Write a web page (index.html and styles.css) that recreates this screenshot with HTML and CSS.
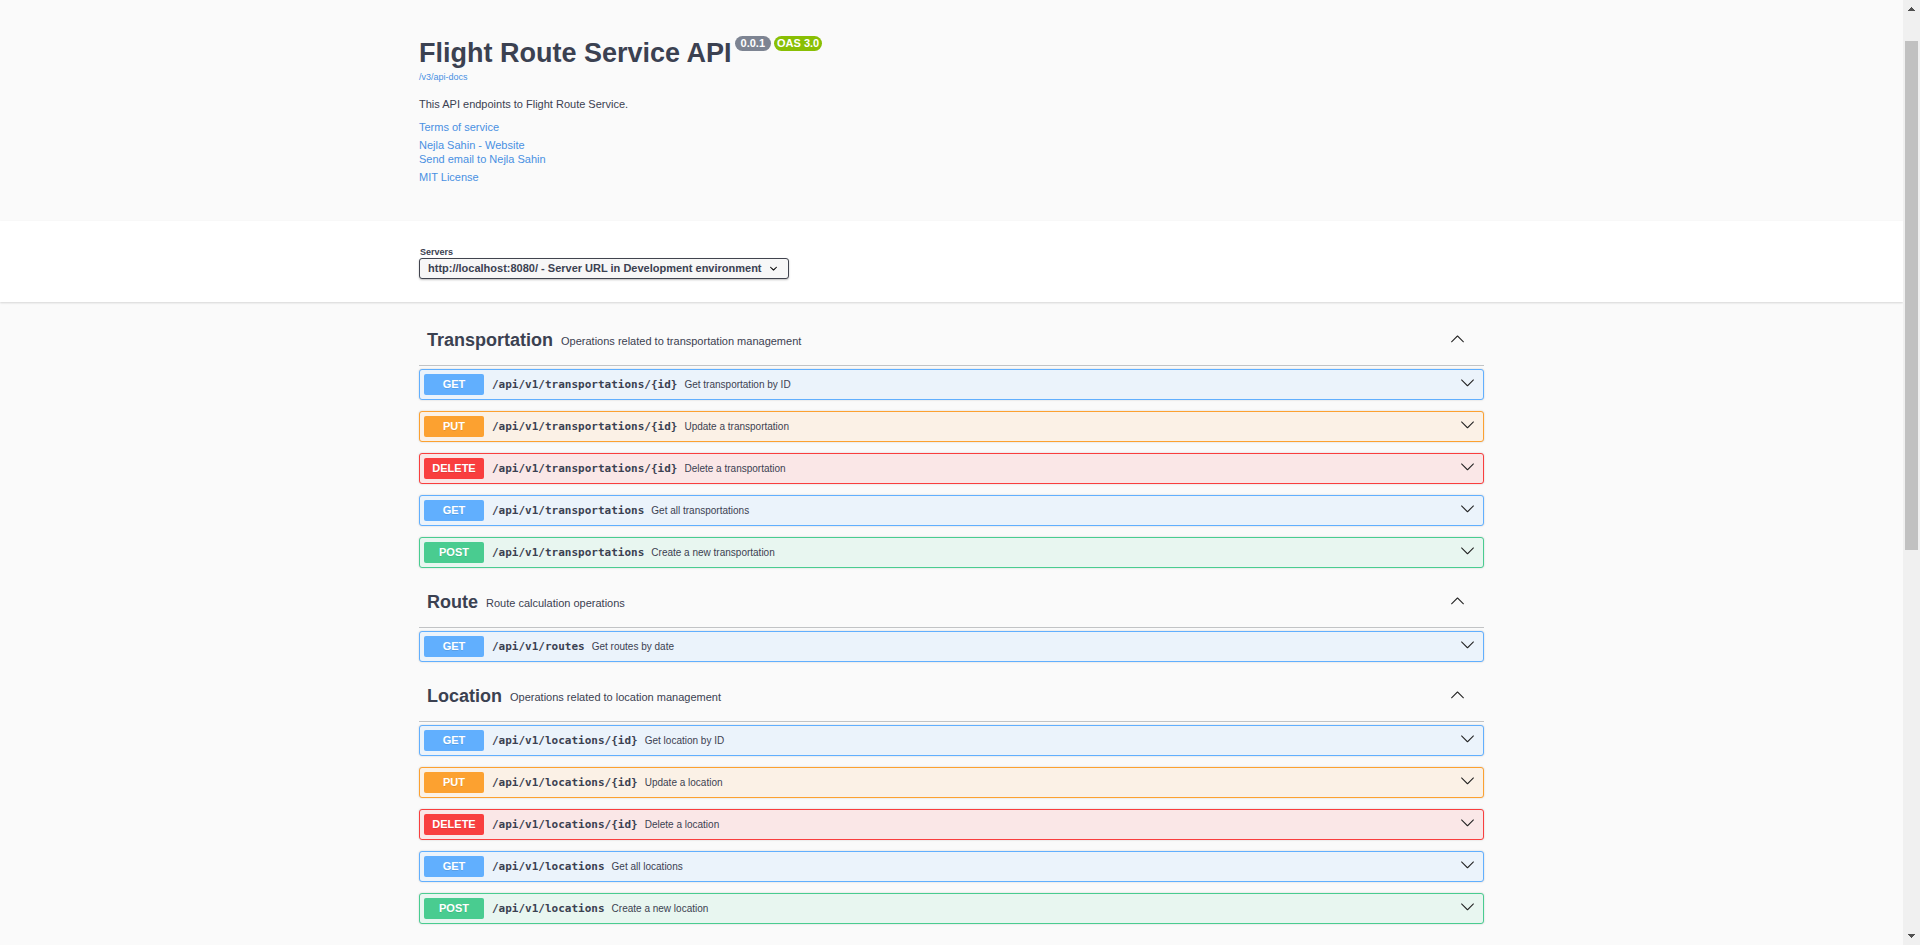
FILE: index.html
```html
<!DOCTYPE html>
<html lang="en">
<head>
<meta charset="utf-8">
<title>Flight Route Service API</title>
<link rel="stylesheet" href="styles.css">
</head>
<body>
<svg class="defs" aria-hidden="true">
  <symbol id="down" viewBox="0 0 20 20"><path d="M17.418 6.109c.272-.268.709-.268.979 0s.271.701 0 .969l-7.908 7.83c-.27.268-.707.268-.979 0l-7.908-7.83c-.27-.268-.27-.701 0-.969.271-.268.709-.268.979 0L10 13.25l7.418-7.141z"/></symbol>
  <symbol id="up" viewBox="0 0 20 20"><path d="M17.418 14.908c.272.27.709.27.979 0s.271-.701 0-.969l-7.908-7.83c-.27-.268-.707-.268-.979 0l-7.908 7.83c-.27.268-.27.701 0 .969.271.27.709.268.979 0L10 7.767l7.418 7.141z"/></symbol>
</svg>
<div class="page">
  <header class="info wrapper">
    <div class="title-row">
      <h1 class="title">Flight Route Service API</h1>
      <span class="badge">0.0.1</span>
      <span class="badge badge-oas">OAS 3.0</span>
    </div>
    <a class="spec-link" href="#">/v3/api-docs</a>
    <p class="about">This API endpoints to Flight Route Service.</p>
    <div class="links">
      <a href="#">Terms of service</a>
      <div class="contact">
        <a href="#">Nejla Sahin - Website</a>
        <a href="#">Send email to Nejla Sahin</a>
      </div>
      <a href="#">MIT License</a>
    </div>
  </header>
  <section class="schemes">
    <div class="wrapper">
      <label class="servers-label" for="servers">Servers</label>
      <div class="select-box">
        <select id="servers" class="servers"><option>http://localhost:8080/ - Server URL in Development environment</option></select>
        <svg class="select-arrow" viewBox="0 0 20 20" aria-hidden="true"><path d="M13.418 7.859c.271-.268.709-.268.978 0 .27.268.272.701 0 .969l-3.908 3.83c-.27.268-.707.268-.979 0l-3.908-3.83c-.27-.267-.27-.701 0-.969.271-.268.709-.268.978 0L10 11l3.418-3.141z"/></svg>
      </div>
    </div>
  </section>
  <main class="wrapper tags">
    <section>
      <div class="tag"><h2 class="tag-name">Transportation</h2><p class="tag-text">Operations related to transportation management</p><button class="toggle" aria-label="Collapse Transportation"><svg class="chevron"><use href="#up"/></svg></button></div>
      <div class="ops">
        <button class="op get"><span class="method">GET</span><span class="path">/api/v1/transportations/{id}</span><span class="summary">Get transportation by ID</span><svg class="chevron"><use href="#down"/></svg></button>
        <button class="op put"><span class="method">PUT</span><span class="path">/api/v1/transportations/{id}</span><span class="summary">Update a transportation</span><svg class="chevron"><use href="#down"/></svg></button>
        <button class="op delete"><span class="method">DELETE</span><span class="path">/api/v1/transportations/{id}</span><span class="summary">Delete a transportation</span><svg class="chevron"><use href="#down"/></svg></button>
        <button class="op get"><span class="method">GET</span><span class="path">/api/v1/transportations</span><span class="summary">Get all transportations</span><svg class="chevron"><use href="#down"/></svg></button>
        <button class="op post"><span class="method">POST</span><span class="path">/api/v1/transportations</span><span class="summary">Create a new transportation</span><svg class="chevron"><use href="#down"/></svg></button>
      </div>
    </section>
    <section>
      <div class="tag"><h2 class="tag-name">Route</h2><p class="tag-text">Route calculation operations</p><button class="toggle" aria-label="Collapse Route"><svg class="chevron"><use href="#up"/></svg></button></div>
      <div class="ops">
        <button class="op get"><span class="method">GET</span><span class="path">/api/v1/routes</span><span class="summary">Get routes by date</span><svg class="chevron"><use href="#down"/></svg></button>
      </div>
    </section>
    <section>
      <div class="tag"><h2 class="tag-name">Location</h2><p class="tag-text">Operations related to location management</p><button class="toggle" aria-label="Collapse Location"><svg class="chevron"><use href="#up"/></svg></button></div>
      <div class="ops">
        <button class="op get"><span class="method">GET</span><span class="path">/api/v1/locations/{id}</span><span class="summary">Get location by ID</span><svg class="chevron"><use href="#down"/></svg></button>
        <button class="op put"><span class="method">PUT</span><span class="path">/api/v1/locations/{id}</span><span class="summary">Update a location</span><svg class="chevron"><use href="#down"/></svg></button>
        <button class="op delete"><span class="method">DELETE</span><span class="path">/api/v1/locations/{id}</span><span class="summary">Delete a location</span><svg class="chevron"><use href="#down"/></svg></button>
        <button class="op get"><span class="method">GET</span><span class="path">/api/v1/locations</span><span class="summary">Get all locations</span><svg class="chevron"><use href="#down"/></svg></button>
        <button class="op post"><span class="method">POST</span><span class="path">/api/v1/locations</span><span class="summary">Create a new location</span><svg class="chevron"><use href="#down"/></svg></button>
      </div>
    </section>
  </main>
</div>
<div class="scrollbar" aria-hidden="true">
  <svg class="scroll-arrow" viewBox="0 0 7 4" shape-rendering="crispEdges"><path d="M3 0h1v1h1v1h1v1h1v1H0V3h1V2h1V1h1z"/></svg>
  <div class="track"><div class="thumb"></div></div>
  <svg class="scroll-arrow" viewBox="0 0 7 4" shape-rendering="crispEdges"><path d="M0 0h7v1H6v1H5v1H4v1H3V3H2V2H1V1H0z"/></svg>
</div>
</body>
</html>
```
FILE: styles.css
```css
* { box-sizing: border-box; }
body {
  margin: 0;
  min-height: 100vh;
  display: grid;
  grid-template-columns: 1fr 17px;
  background: #fafafa;
  color: #3b4151;
  font-family: "Liberation Sans", Arial, sans-serif;
  font-size: 11px;
}
h1, h2, p { margin: 0; }
button, select { font: inherit; color: inherit; }
a { color: #4990e2; text-decoration: none; }
.defs { display: none; }
.wrapper { width: 100%; max-width: 1095px; margin: 0 auto; padding: 0 15px; }

.info { padding-top: 36px; padding-bottom: 37px; }
.title-row { display: flex; align-items: flex-start; gap: 3px; }
.title { font-size: 27px; line-height: 34px; }
.badge {
  padding: 0 6px;
  border-radius: 8px;
  background: #7d8492;
  color: #fff;
  font-weight: bold;
  line-height: 15px;
}
.badge-oas { padding: 0 3px; background: #89bf04; }
.spec-link { display: block; font-size: 9px; line-height: 14px; }
.about { margin-top: 13px; line-height: 15px; }
.links { display: flex; flex-direction: column; align-items: flex-start; gap: 4px; margin-top: 8px; line-height: 14px; }
.contact { display: flex; flex-direction: column; }

.schemes { padding: 25px 0 23px; background: #fff; box-shadow: 0 1px 2px rgba(0, 0, 0, .15); }
.servers-label { display: block; padding-left: 1px; font-size: 9px; font-weight: bold; line-height: 12px; }
.select-box { position: relative; width: 370px; }
.servers {
  display: block;
  width: 100%;
  height: 21px;
  padding: 0 20px 1px 8px;
  appearance: none;
  border: 1px solid #41444e;
  border-radius: 3px;
  background: #f7f7f7;
  box-shadow: 0 1px 2px rgba(0, 0, 0, .25);
  font-weight: bold;
}
.select-arrow { position: absolute; top: 3px; right: 8px; width: 15px; height: 15px; pointer-events: none; }

.tags { padding-top: 4px; }
.tag {
  display: flex;
  align-items: center;
  gap: 8px;
  height: 60px;
  padding: 9px 19px 0 8px;
  border-bottom: 1px solid #c1c3c5;
}
.tag-name { font-size: 18px; line-height: 24px; }
.tag-text { flex: 1; line-height: 16px; padding-top: 2px; }
.toggle { display: flex; padding: 0 0 3px; border: 0; background: none; }
.chevron { width: 15px; height: 15px; fill: #222; }
.ops { display: grid; gap: 11px; padding-top: 3px; }
.op {
  display: flex;
  align-items: center;
  width: 100%;
  height: 31px;
  padding: 0 8px 0 4px;
  border: 1px solid var(--line);
  border-radius: 3px;
  background: var(--fill);
  box-shadow: 0 0 2px rgba(0, 0, 0, .19);
  text-align: left;
}
.op .chevron { margin-bottom: 4px; }
.method {
  width: 60px;
  border-radius: 2px;
  background: var(--line);
  color: #fff;
  font-weight: bold;
  line-height: 21px;
  text-align: center;
  text-shadow: 0 1px 0 rgba(0, 0, 0, .1);
}
.path { padding: 0 7px 0 8px; font-family: "DejaVu Sans Mono", monospace; font-weight: bold; }
.summary { flex: 1; font-size: 10px; }
.get { --line: #61affe; --fill: #ebf3fb; }
.put { --line: #fca130; --fill: #fbf1e6; }
.delete { --line: #f93e3e; --fill: #fae7e7; }
.post { --line: #49cc90; --fill: #e8f6f0; }

.scrollbar { display: flex; flex-direction: column; align-items: center; padding: 7px 2px; background: #f0f0f0; }
.scroll-arrow { width: 7px; height: 4px; fill: #505050; }
.track { flex: 1; width: 100%; padding: 30px 0; }
.thumb { height: 59%; background: #c1c1c1; }
```
